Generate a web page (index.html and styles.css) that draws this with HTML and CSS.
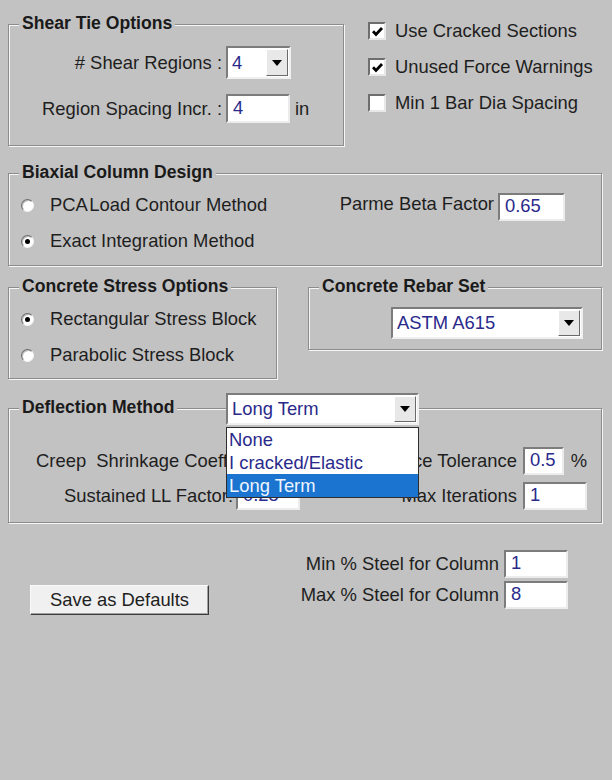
FILE: index.html
```html
<!DOCTYPE html>
<html lang="en">
<head>
  <meta charset="UTF-8" />
  <meta name="viewport" content="width=device-width, initial-scale=1.0"/>
  <title>Design Options</title>
  <link rel="stylesheet" href="styles.css">
</head>
<body>
  <div class="panel">
    <div class="top-row">
      <div class="group shear">
        <div class="group-title">Shear Tie Options</div>
        <div class="shear-grid">
          <span class="lbl"># Shear Regions :</span>
          <div class="combo combo-shear"><span class="combo-val">4</span><span class="combo-btn"><i class="arrow"></i></span></div>
          <span></span>
          <span class="lbl">Region Spacing Incr. :</span>
          <div class="field field-spacing">4</div>
          <span class="unit">in</span>
        </div>
      </div>
      <div class="checks">
        <div class="check-row">
          <span class="checkbox"><svg viewBox="0 0 13 13" width="13" height="13"><polyline points="2,6.2 5,9.4 11,3" fill="none" stroke="#000" stroke-width="2.8"/></svg></span>
          Use Cracked Sections
        </div>
        <div class="check-row">
          <span class="checkbox"><svg viewBox="0 0 13 13" width="13" height="13"><polyline points="2,6.2 5,9.4 11,3" fill="none" stroke="#000" stroke-width="2.8"/></svg></span>
          Unused Force Warnings
        </div>
        <div class="check-row">
          <span class="checkbox"></span>
          Min 1 Bar Dia Spacing
        </div>
      </div>
    </div>

    <div class="group biax">
      <div class="group-title">Biaxial Column Design</div>
      <div class="biax-body">
        <div class="radios">
          <div class="radio-row"><span class="radio"></span>PCA&#8202;Load Contour Method</div>
          <div class="radio-row"><span class="radio on"></span>Exact Integration Method</div>
        </div>
        <div class="parme-row">
          <span>Parme Beta Factor</span>
          <div class="field field-parme">0.65</div>
        </div>
      </div>
    </div>

    <div class="mid-row">
      <div class="group stress">
        <div class="group-title">Concrete Stress Options</div>
        <div class="radios stress-radios">
          <div class="radio-row"><span class="radio on"></span>Rectangular Stress Block</div>
          <div class="radio-row"><span class="radio"></span>Parabolic Stress Block</div>
        </div>
      </div>
      <div class="group rebar">
        <div class="group-title">Concrete Rebar Set</div>
        <div class="combo combo-rebar"><span class="combo-val">ASTM A615</span><span class="combo-btn"><i class="arrow"></i></span></div>
      </div>
    </div>

    <div class="group deflect">
      <div class="deflect-head">
        <div class="group-title head-title">Deflection Method</div>
        <div class="combo combo-deflect">
          <span class="combo-val">Long Term</span><span class="combo-btn"><i class="arrow"></i></span>
          <ul class="dropdown">
            <li>None</li>
            <li>I cracked/Elastic</li>
            <li class="selected">Long Term</li>
          </ul>
        </div>
      </div>
      <div class="deflect-grid">
        <span class="lbl">Creep&nbsp; Shrinkage Coeff.</span>
        <div class="field">2</div>
        <span></span>
        <span class="lbl lbl-right">Convergence Tolerance</span>
        <div class="field-wrap"><div class="field field-tol">0.5</div><span class="unit">%</span></div>

        <span class="lbl">Sustained LL Factor:</span>
        <div class="field">0.25</div>
        <span></span>
        <span class="lbl lbl-right">Max Iterations</span>
        <div class="field">1</div>
      </div>
    </div>

    <div class="bottom-row">
      <button class="btn-save">Save as Defaults</button>
      <div class="steel-grid">
        <span class="lbl">Min % Steel for Column</span>
        <div class="field">1</div>
        <span class="lbl">Max % Steel for Column</span>
        <div class="field">8</div>
      </div>
    </div>
  </div>
</body>
</html>
```

FILE: styles.css
```css
* { box-sizing: border-box; }
body { margin: 0; background: #c2c2c2; font-family: "Liberation Sans", Arial, sans-serif; font-size: 18.4px; color: #1e1e1e; }
.panel { width: 612px; height: 780px; padding: 0 10px 0 8px; }

.group { border: 1px solid #8c8c8c; box-shadow: inset 1px 1px 0 #f6f6f6, 1px 1px 0 #f6f6f6; }
.group-title { width: max-content; margin: -12px 0 0 10px; padding: 0 3px; background: #c2c2c2; font-weight: bold; font-size: 17.6px; line-height: 20px; color: #1a1a1a; }

.lbl { text-align: right; white-space: nowrap; }
.unit { white-space: nowrap; }

.field { height: 28px; background: #fff; border: 2px solid; border-color: #7c7c7c #ececec #ececec #7c7c7c; color: #2a2a8c; padding-left: 5px; display: flex; align-items: center; line-height: 1; }

.combo { display: flex; background: #fff; border: 2px solid; border-color: #7c7c7c #f0f0f0 #f0f0f0 #7c7c7c; }
.combo-val { flex: 1; padding-left: 4px; color: #2a2a8c; display: flex; align-items: center; }
.combo-btn { width: 22px; margin: 1px; background: #e8e8e8; border: 1px solid; border-color: #fff #6a6a6a #6a6a6a #fff; display: flex; align-items: center; justify-content: center; }
.arrow { width: 0; height: 0; border-left: 5px solid transparent; border-right: 5px solid transparent; border-top: 6px solid #000; }

/* shear + checks */
.top-row { display: flex; align-items: flex-start; }
.shear { width: 336px; margin-top: 24px; }
.shear-grid { display: grid; grid-template-columns: 213px 65px auto; column-gap: 4px; row-gap: 13px; grid-auto-rows: 33px; align-items: center; margin-top: 13px; padding-bottom: 20px; }
.combo-shear { height: 33px; }
.field-spacing { width: 64px; height: 29px; }

.checks { margin-left: 24px; padding-top: 13px; }
.check-row { height: 36px; display: flex; align-items: center; gap: 9px; white-space: nowrap; }
.checkbox { width: 18px; height: 18px; background: #fff; border: 2px solid; border-color: #6e6e6e #e8e8e8 #e8e8e8 #6e6e6e; display: flex; align-items: center; justify-content: center; }

/* radios */
.radio-row { height: 36px; display: flex; align-items: center; gap: 16px; padding-left: 12px; white-space: nowrap; }
.radio { width: 13px; height: 13px; border-radius: 50%; background: #fff; border: 1px solid; border-color: #6a6a6a #f4f4f4 #f4f4f4 #6a6a6a; box-shadow: inset 1px 1px 0 #b8b8b8; display: flex; align-items: center; justify-content: center; }
.radio.on::after { content: ""; width: 5px; height: 5px; border-radius: 50%; background: #000; }

.biax { width: 594px; margin-top: 27px; }
.biax-body { display: grid; grid-template-columns: 1fr auto; margin-top: 5px; padding-bottom: 6px; }
.parme-row { height: 36px; display: flex; align-items: center; gap: 4px; padding-right: 36px; }
.parme-row span { margin-top: -3px; }
.field-parme { width: 67px; margin-top: 3px; }

.mid-row { display: flex; align-items: flex-start; gap: 31px; margin-top: 21px; }
.stress { width: 269px; }
.stress-radios { margin-top: 5px; padding-bottom: 5px; }
.rebar { width: 294px; padding-bottom: 10px; }
.combo-rebar { width: 192px; height: 32px; margin: 11px 0 0 82px; }

/* deflection */
.deflect { width: 594px; margin-top: 29px; padding-bottom: 9px; }
.deflect-head { display: grid; grid-template-columns: 217px 193px; margin-top: -16px; }
.head-title { margin: 4px 0 0 10px; }
.combo-deflect { height: 32px; position: relative; }
.dropdown { position: absolute; left: -2px; top: 32px; width: 193px; margin: 0; padding: 0; list-style: none; background: #fff; border: 1px solid #2e2e2e; z-index: 2; }
.dropdown li { height: 23px; line-height: 23px; padding-left: 2px; color: #2a2a8c; }
.dropdown li.selected { background: #1a74d0; color: #eef4ff; }

.deflect-grid { display: grid; grid-template-columns: 227px 64px 1fr auto 64px; grid-auto-rows: 35px; align-items: center; margin-top: 18px; padding-right: 14px; }
.deflect-grid .lbl { padding-right: 3px; }
.deflect-grid .lbl-right { padding-right: 6px; }
.field-wrap { display: flex; align-items: center; gap: 7px; }
.field-tol { width: 48px; }

/* bottom */
.bottom-row { display: flex; align-items: flex-start; margin-top: 25px; }
.btn-save { width: 179px; height: 30px; margin: 37px 0 0 22px; padding: 0; font: inherit; color: #1e1e1e; background: #f0f0f0; border: 1px solid; border-color: #fafafa #3c3c3c #3c3c3c #fafafa; box-shadow: inset -1px -1px 0 #a0a0a0; }
.steel-grid { margin-left: auto; margin-right: 34px; display: grid; grid-template-columns: auto 64px; column-gap: 5px; grid-auto-rows: 31px; align-items: center; }
```
